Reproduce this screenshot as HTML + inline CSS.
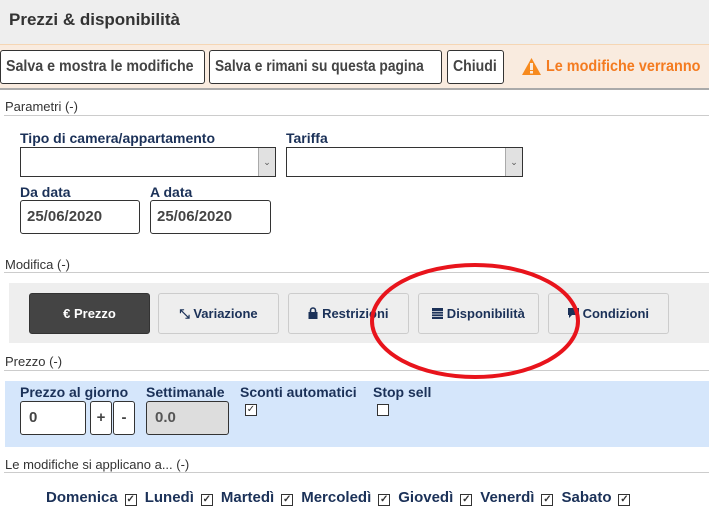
<!DOCTYPE html>
<html><head><meta charset="utf-8"><style>
*{margin:0;padding:0;box-sizing:border-box}
body{width:709px;height:519px;overflow:hidden;background:#fff;font-family:"Liberation Sans",sans-serif;position:relative;color:#333}
.a{position:absolute;white-space:nowrap}
.hdr{left:0;top:0;width:709px;height:44px;background:#eeeeee}
.band{left:0;top:44px;width:709px;height:46px;background:#f9ebdf;border-top:1px solid #f5d6b4;border-bottom:2px solid #aaa}
.btn{position:absolute;top:50px;height:34px;border:1px solid #333;border-radius:3px;background:#fff}
.bt{position:absolute;top:58px;font-weight:bold;font-size:16px;color:#444;white-space:nowrap;transform-origin:left top}
.sec{font-size:13px;color:#333;left:5px}
.line{position:absolute;left:4px;width:705px;height:1px;background:#ccc}
.lbl{font-weight:bold;font-size:14px;color:#1b3158}
.sel{position:absolute;height:30px;border:1px solid #333;background:#fff}
.sel i{position:absolute;right:0;top:0;width:17px;height:28px;background:#e1e1e1;border-left:1px solid #aaa;font-style:normal;font-size:9px;color:#555;text-align:center;line-height:28px}
.inp{position:absolute;height:34px;border:1px solid #333;border-radius:3px;background:#fff;font-size:15px;font-weight:bold;color:#444;line-height:32px;padding-left:8px}
.tb{position:absolute;top:293px;width:121px;height:41px;border:1px solid #ccc;border-radius:3px;background:#eee;font-weight:bold;font-size:13px;color:#1b3158;text-align:center;line-height:39px}
.cb{position:absolute;width:12px;height:12px;border:1px solid #333;background:#fff;font-size:10px;line-height:10px;text-align:center;color:#333}
.days{left:46px;top:489px;font-weight:bold;font-size:15px;color:#1b3158}
.days span.c{display:inline-block;width:12px;height:12px;border:1px solid #333;font-size:10px;line-height:10px;text-align:center;color:#333;margin:0 8px 0 7px;vertical-align:0}
</style></head><body>
<div class="a hdr"></div>
<div class="a" style="left:9px;top:10px;font-size:17px;font-weight:bold;color:#333">Prezzi &amp; disponibilità</div>
<div class="a band"></div>
<div class="btn" style="left:0;width:205px"></div>
<div class="btn" style="left:209px;width:233px"></div>
<div class="btn" style="left:447px;width:57px"></div>
<div class="bt" style="left:6px;transform:scaleX(0.89)">Salva e mostra le modifiche</div>
<div class="bt" style="left:215px;transform:scaleX(0.86)">Salva e rimani su questa pagina</div>
<div class="bt" style="left:453px;transform:scaleX(0.88)">Chiudi</div>
<svg class="a" style="left:521px;top:57px" width="21" height="19" viewBox="0 0 21 19"><path d="M10.5 1 L20 18 L1 18 Z" fill="#f78a1e"/><rect x="9" y="6" width="3" height="7" fill="#f9ebdf"/><rect x="9" y="14" width="3" height="2.5" fill="#f9ebdf"/></svg>
<div class="a" style="left:546px;top:58px;font-size:16px;font-weight:bold;color:#f47b20;transform:scaleX(0.9);transform-origin:left top">Le modifiche verranno</div>

<div class="a sec" style="top:99px">Parametri (-)</div>
<div class="line" style="top:115px"></div>
<div class="a lbl" style="left:20px;top:130px">Tipo di camera/appartamento</div>
<div class="a lbl" style="left:286px;top:130px">Tariffa</div>
<div class="sel" style="left:20px;top:147px;width:256px"><i>&#8964;</i></div>
<div class="sel" style="left:286px;top:147px;width:237px"><i>&#8964;</i></div>
<div class="a lbl" style="left:20px;top:184px">Da data</div>
<div class="a lbl" style="left:150px;top:184px">A data</div>
<div class="inp" style="left:20px;top:200px;width:120px;padding-left:6px">25/06/2020</div>
<div class="inp" style="left:150px;top:200px;width:121px;padding-left:6px">25/06/2020</div>

<div class="a sec" style="top:257px">Modifica (-)</div>
<div class="line" style="top:272px"></div>
<div class="a" style="left:9px;top:283px;width:700px;height:60px;background:#eeeeee"></div>
<div class="tb" style="left:29px;background:#444;border-color:#333;color:#fff">€ Prezzo</div>
<div class="tb" style="left:158px">&#10529; Variazione</div>
<div class="tb" style="left:288px"><svg width="10" height="12" viewBox="0 0 10 12" style="vertical-align:-1px"><path d="M2.5 5V3.5a2.5 2.5 0 0 1 5 0V5" stroke="#1b3158" stroke-width="1.6" fill="none"/><rect x="0.5" y="5" width="9" height="7" fill="#1b3158"/></svg> Restrizioni</div>
<div class="tb" style="left:418px"><svg width="11" height="12" viewBox="0 0 11 12" style="vertical-align:-1px"><rect x="0" y="1" width="11" height="11" fill="#1b3158"/><path d="M0 4.5h11M0 7h11M0 9.5h11" stroke="#eee" stroke-width="0.8"/></svg> Disponibilità</div>
<div class="tb" style="left:548px"><svg width="11" height="12" viewBox="0 0 11 12" style="vertical-align:-1px"><path d="M0 1h11v7H4L1 11V8H0z" fill="#1b3158"/></svg> Condizioni</div>

<div class="a sec" style="top:354px">Prezzo (-)</div>
<div class="line" style="top:370px"></div>
<div class="a" style="left:5px;top:381px;width:704px;height:66px;background:#d5e6fb"></div>
<div class="a lbl" style="left:20px;top:384px">Prezzo al giorno</div>
<div class="a lbl" style="left:146px;top:384px">Settimanale</div>
<div class="a lbl" style="left:240px;top:384px">Sconti automatici</div>
<div class="a lbl" style="left:373px;top:384px">Stop sell</div>
<div class="inp" style="left:20px;top:401px;width:66px">0</div>
<div class="inp" style="left:90px;top:401px;width:22px;padding:0;text-align:center">+</div>
<div class="inp" style="left:113px;top:401px;width:22px;padding:0;text-align:center">-</div>
<div class="inp" style="left:146px;top:401px;width:83px;background:#ddd;color:#555">0.0</div>
<div class="cb" style="left:245px;top:404px">&#10003;</div>
<div class="cb" style="left:377px;top:404px"></div>

<div class="a sec" style="top:457px">Le modifiche si applicano a... (-)</div>
<div class="line" style="top:472px"></div>
<div class="a days">Domenica<span class="c">&#10003;</span>Lunedì<span class="c">&#10003;</span>Martedì<span class="c">&#10003;</span>Mercoledì<span class="c">&#10003;</span>Giovedì<span class="c">&#10003;</span>Venerdì<span class="c">&#10003;</span>Sabato<span class="c">&#10003;</span></div>

<svg class="a" style="left:0;top:0" width="709" height="519"><ellipse cx="475" cy="321" rx="103" ry="56" fill="none" stroke="#e8141c" stroke-width="4"/></svg>
</body></html>
